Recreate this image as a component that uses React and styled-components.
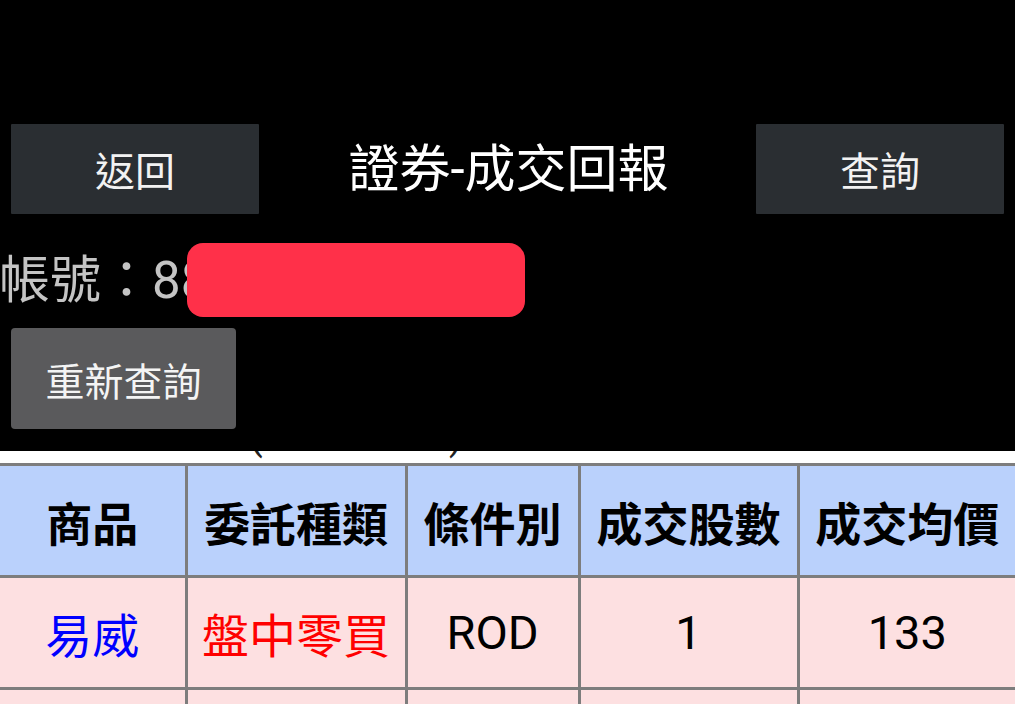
import React from 'react';
import styled, { createGlobalStyle } from 'styled-components';

const GlobalStyle = createGlobalStyle`
  html, body {
    margin: 0;
    padding: 0;
    background: #000;
    overflow: hidden;
  }
  * {
    box-sizing: border-box;
  }
`;

const Page = styled.div`
  width: 1015px;
  height: 704px;
  background: #000;
  display: flex;
  flex-direction: column;
  font-family: Roboto, "Noto Sans CJK TC", sans-serif;
  overflow: hidden;

  & > * {
    flex-shrink: 0;
  }
`;

const TopBar = styled.div`
  display: flex;
  align-items: center;
  justify-content: space-between;
  margin-top: 124px;
  padding: 0 11px;
  height: 90px;
`;

const NavButton = styled.button`
  width: 248px;
  height: 90px;
  border: none;
  border-radius: 1px;
  background: #2a2e32;
  color: #f2f2f2;
  font-family: inherit;
  font-size: 40px;
  padding: 0;
`;

const Title = styled.h1`
  margin: 0 0 0 2px;
  color: #fff;
  font-weight: 400;
  font-size: 51px;
  line-height: 1;
`;

const AccountRow = styled.div`
  position: relative;
  margin-top: 29px;
  height: 74px;
  display: flex;
  align-items: center;
  margin-left: -1px;
  color: #c4c4c4;
  font-size: 51px;
  line-height: 1;
  white-space: nowrap;
`;

const Redact = styled.div`
  position: absolute;
  left: 188px;
  top: 0;
  width: 338px;
  height: 74px;
  border-radius: 16px;
  background: #ff3049;
`;

const RequeryButton = styled.button`
  align-self: flex-start;
  margin: 11px 0 0 11px;
  width: 225px;
  height: 101px;
  border: none;
  border-radius: 4px;
  background: #5a5a5c;
  color: #f4f4f4;
  font-family: inherit;
  font-size: 39px;
  padding: 0;
`;

const CutStrip = styled.div`
  margin-top: 22px;
  height: 12px;
  background: #fff;
  overflow: hidden;
`;

const CutText = styled.div`
  display: flex;
  justify-content: space-between;
  width: 214px;
  margin: -38px 0 0 249px;
  font-size: 40px;
  line-height: 46px;
  color: #222;
`;

const Grid = styled.table`
  width: 1015px;
  border-collapse: collapse;
  table-layout: fixed;
  border-top: 3px solid #7d7d7d;
`;

const Row = styled.tr`
  background: ${p => (p.$head ? '#bad1fc' : '#fde0e1')};
  height: ${p => (p.$height ? p.$height : 112)}px;
`;

const Cell = styled.td`
  border: 3px solid #7d7d7d;
  border-top: none;
  padding: 0;
  text-align: center;
  vertical-align: middle;
  font-size: ${p => (p.$head ? 46 : 47)}px;
  font-weight: ${p => (p.$head ? 700 : 400)};
  color: ${p => p.$color || '#000'};
  white-space: nowrap;

  &:first-child {
    border-left: none;
  }
  &:last-child {
    border-right: none;
  }
`;

const columns = [186, 220, 173, 219, 217];
const headers = ['商品', '委託種類', '條件別', '成交股數', '成交均價'];
const trades = [
  [
    { text: '易威', color: '#0000ff' },
    { text: '盤中零買', color: '#ff0000' },
    { text: 'ROD' },
    { text: '1' },
    { text: '133' },
  ],
];

export default function App() {
  return (
    <Page>
      <GlobalStyle />
      <TopBar>
        <NavButton>返回</NavButton>
        <Title>證券-成交回報</Title>
        <NavButton>查詢</NavButton>
      </TopBar>
      <AccountRow>
        帳號：88
        <Redact />
      </AccountRow>
      <RequeryButton>重新查詢</RequeryButton>
      <CutStrip>
        <CutText>
          <span>(</span>
          <span>)</span>
        </CutText>
      </CutStrip>
      <Grid>
        <colgroup>
          {columns.map((w, i) => (
            <col key={i} style={{ width: w }} />
          ))}
        </colgroup>
        <tbody>
          <Row $head>
            {headers.map(h => (
              <Cell key={h} $head>
                {h}
              </Cell>
            ))}
          </Row>
          {trades.map((t, i) => (
            <Row key={i}>
              {t.map((c, j) => (
                <Cell key={j} $color={c.color}>
                  {c.text}
                </Cell>
              ))}
            </Row>
          ))}
          <Row $height={40}>
            {columns.map((_, j) => (
              <Cell key={j} />
            ))}
          </Row>
        </tbody>
      </Grid>
    </Page>
  );
}
